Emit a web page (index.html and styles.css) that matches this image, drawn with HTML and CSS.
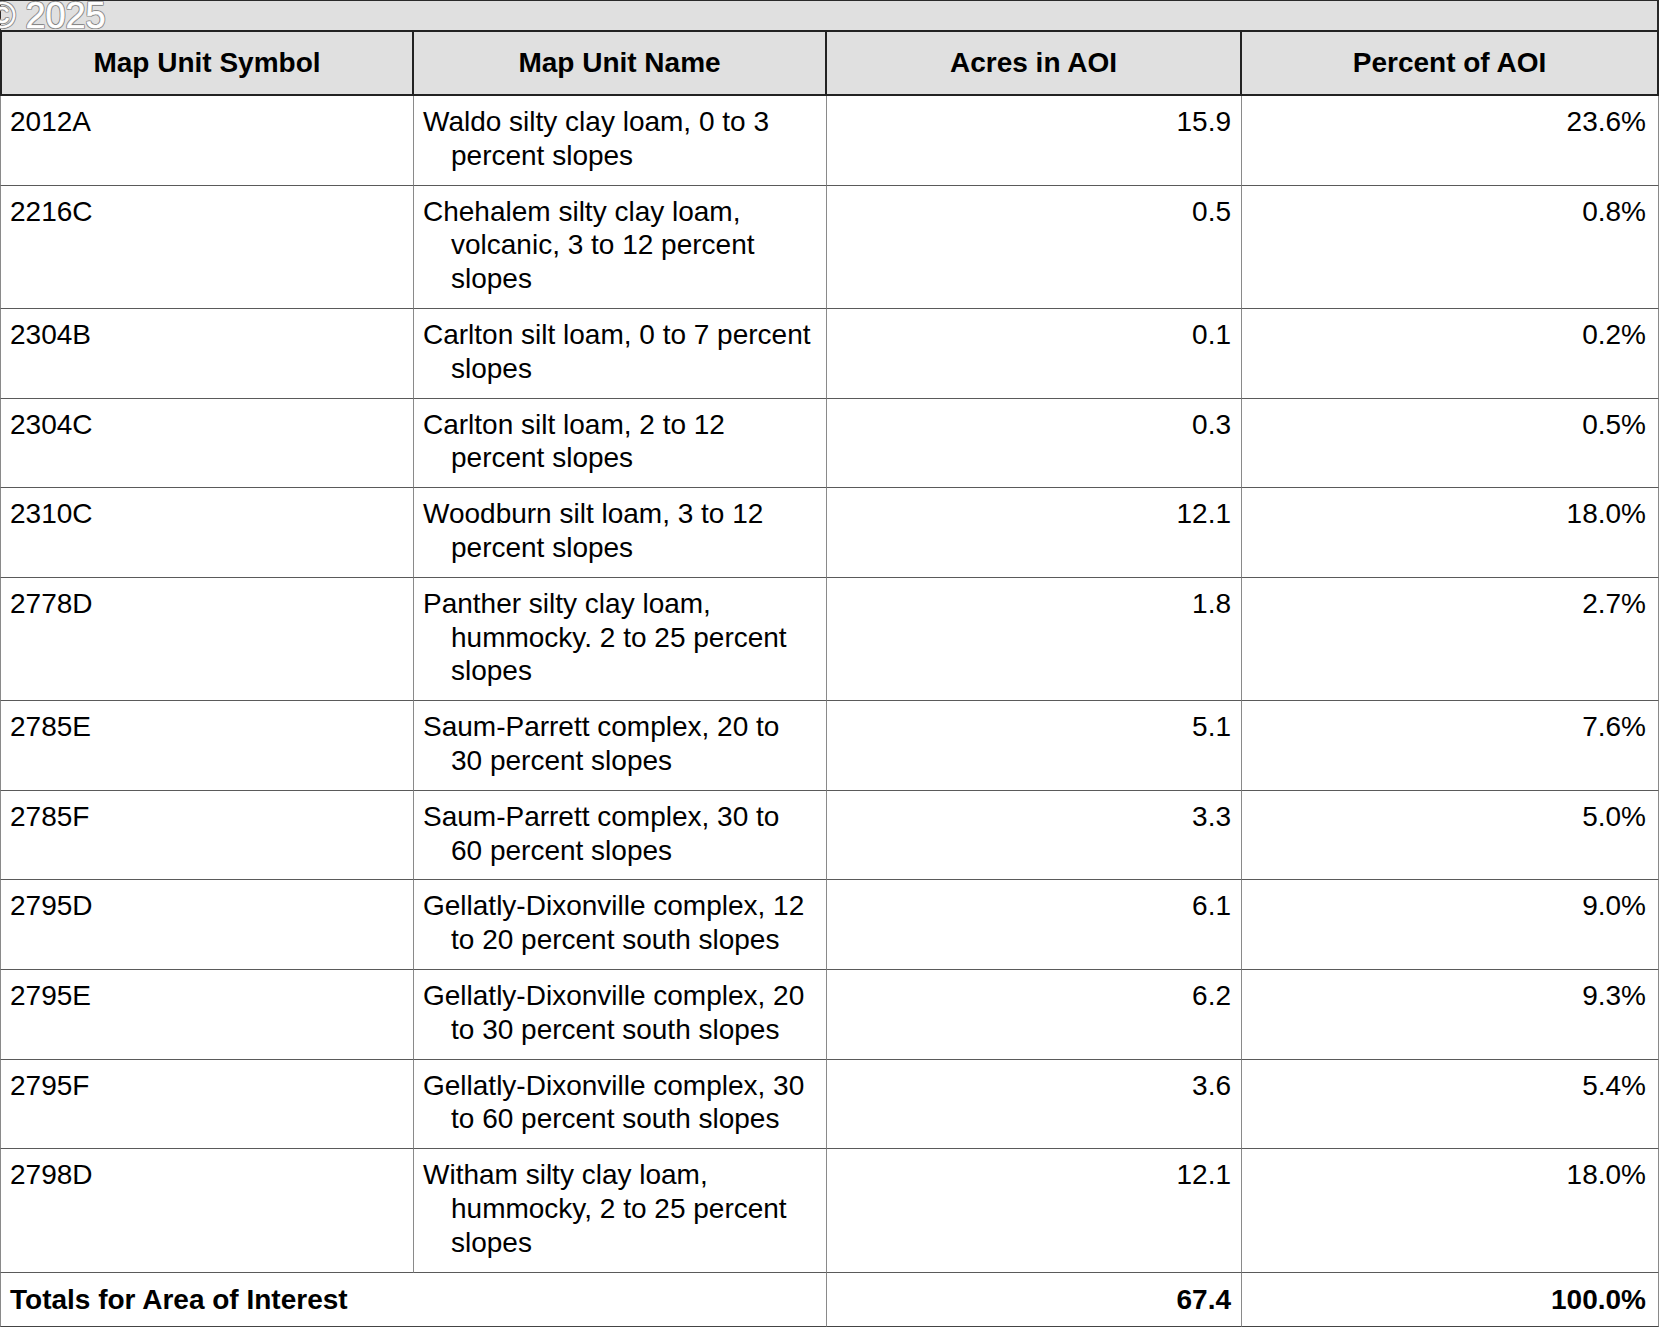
FILE: index.html
```html
<!DOCTYPE html>
<html lang="en">
<head>
<meta charset="utf-8">
<title>Map Unit Legend</title>
<link rel="stylesheet" href="styles.css">
</head>
<body>
<div class="sheet">
  <div class="band"><span class="copy">© 2025</span></div>
  <table class="legend">
    <colgroup>
      <col class="c1"><col class="c2"><col class="c3"><col class="c4">
    </colgroup>
    <thead>
      <tr>
        <th class="first">Map Unit Symbol</th>
        <th>Map Unit Name</th>
        <th>Acres in AOI</th>
        <th>Percent of AOI</th>
      </tr>
    </thead>
    <tbody>
      <tr>
        <td class="first">2012A</td>
        <td class="name">Waldo silty clay loam, 0 to 3<br>percent slopes</td>
        <td class="num">15.9</td>
        <td class="num pct">23.6%</td>
      </tr>
      <tr>
        <td class="first">2216C</td>
        <td class="name">Chehalem silty clay loam,<br>volcanic, 3 to 12 percent<br>slopes</td>
        <td class="num">0.5</td>
        <td class="num pct">0.8%</td>
      </tr>
      <tr>
        <td class="first">2304B</td>
        <td class="name">Carlton silt loam, 0 to 7 percent<br>slopes</td>
        <td class="num">0.1</td>
        <td class="num pct">0.2%</td>
      </tr>
      <tr>
        <td class="first">2304C</td>
        <td class="name">Carlton silt loam, 2 to 12<br>percent slopes</td>
        <td class="num">0.3</td>
        <td class="num pct">0.5%</td>
      </tr>
      <tr>
        <td class="first">2310C</td>
        <td class="name">Woodburn silt loam, 3 to 12<br>percent slopes</td>
        <td class="num">12.1</td>
        <td class="num pct">18.0%</td>
      </tr>
      <tr>
        <td class="first">2778D</td>
        <td class="name">Panther silty clay loam,<br>hummocky. 2 to 25 percent<br>slopes</td>
        <td class="num">1.8</td>
        <td class="num pct">2.7%</td>
      </tr>
      <tr>
        <td class="first">2785E</td>
        <td class="name">Saum-Parrett complex, 20 to<br>30 percent slopes</td>
        <td class="num">5.1</td>
        <td class="num pct">7.6%</td>
      </tr>
      <tr>
        <td class="first">2785F</td>
        <td class="name">Saum-Parrett complex, 30 to<br>60 percent slopes</td>
        <td class="num">3.3</td>
        <td class="num pct">5.0%</td>
      </tr>
      <tr>
        <td class="first">2795D</td>
        <td class="name">Gellatly-Dixonville complex, 12<br>to 20 percent south slopes</td>
        <td class="num">6.1</td>
        <td class="num pct">9.0%</td>
      </tr>
      <tr>
        <td class="first">2795E</td>
        <td class="name">Gellatly-Dixonville complex, 20<br>to 30 percent south slopes</td>
        <td class="num">6.2</td>
        <td class="num pct">9.3%</td>
      </tr>
      <tr>
        <td class="first">2795F</td>
        <td class="name">Gellatly-Dixonville complex, 30<br>to 60 percent south slopes</td>
        <td class="num">3.6</td>
        <td class="num pct">5.4%</td>
      </tr>
      <tr>
        <td class="first">2798D</td>
        <td class="name">Witham silty clay loam,<br>hummocky, 2 to 25 percent<br>slopes</td>
        <td class="num">12.1</td>
        <td class="num pct">18.0%</td>
      </tr>
      <tr class="totals">
        <td class="first" colspan="2">Totals for Area of Interest</td>
        <td class="num">67.4</td>
        <td class="num pct">100.0%</td>
      </tr>
    </tbody>
  </table>
</div>
</body>
</html>
```

FILE: styles.css
```css
html, body {
  margin: 0;
  padding: 0;
  background: #ffffff;
}

body {
  font-family: "Liberation Sans", Arial, sans-serif;
  color: #000000;
  overflow: hidden;
}

.sheet {
  width: 1659px;
}

.band {
  height: 29px;
  background: #e0e0e0;
  border-top: 1px solid #2a2a2a;
  border-left: 1px solid #2a2a2a;
  border-right: 2px solid #2a2a2a;
  line-height: 29px;
  white-space: nowrap;
}

.copy {
  display: inline-block;
  margin-left: -12px;
  font-size: 36px;
  font-weight: 400;
  color: #ffffff;
  -webkit-text-stroke: 0.6px #ffffff;
  text-shadow:
    -1px 0 0 #858585,
    1px 0 0 #858585,
    0 -1px 0 #858585,
    0 1px 0 #858585,
    -1px -1px 0 #9a9a9a,
    1px 1px 0 #9a9a9a,
    -1px 1px 0 #9a9a9a,
    1px -1px 0 #9a9a9a;
}

.legend {
  width: 1659px;
  table-layout: fixed;
  border-collapse: separate;
  border-spacing: 0;
  font-size: 28px;
  line-height: 33.8px;
}

.c1 { width: 414px; }
.c2 { width: 413px; }
.c3 { width: 415px; }
.c4 { width: 417px; }

.legend th {
  box-sizing: border-box;
  height: 66px;
  padding: 0 6px;
  background: #e0e0e0;
  font-weight: 700;
  text-align: center;
  vertical-align: middle;
  border-top: 2px solid #222222;
  border-bottom: 2px solid #222222;
  border-right: 2px solid #222222;
}

.legend th.first {
  border-left: 2px solid #222222;
}

.legend td {
  padding: 9px 10px 12px 9px;
  vertical-align: top;
  white-space: nowrap;
  border-bottom: 1px solid #5a5a5a;
  border-right: 1px solid #8a8a8a;
}

.legend td.first {
  border-left: 1px solid #8a8a8a;
}

.legend td.name {
  padding-left: 37px;
  text-indent: -28px;
}

.legend td.num {
  text-align: right;
}

.legend td.pct {
  padding-right: 12px;
}

.legend .totals td {
  padding-top: 10px;
  padding-bottom: 10px;
  font-weight: 700;
  border-bottom-color: #444444;
}
```
